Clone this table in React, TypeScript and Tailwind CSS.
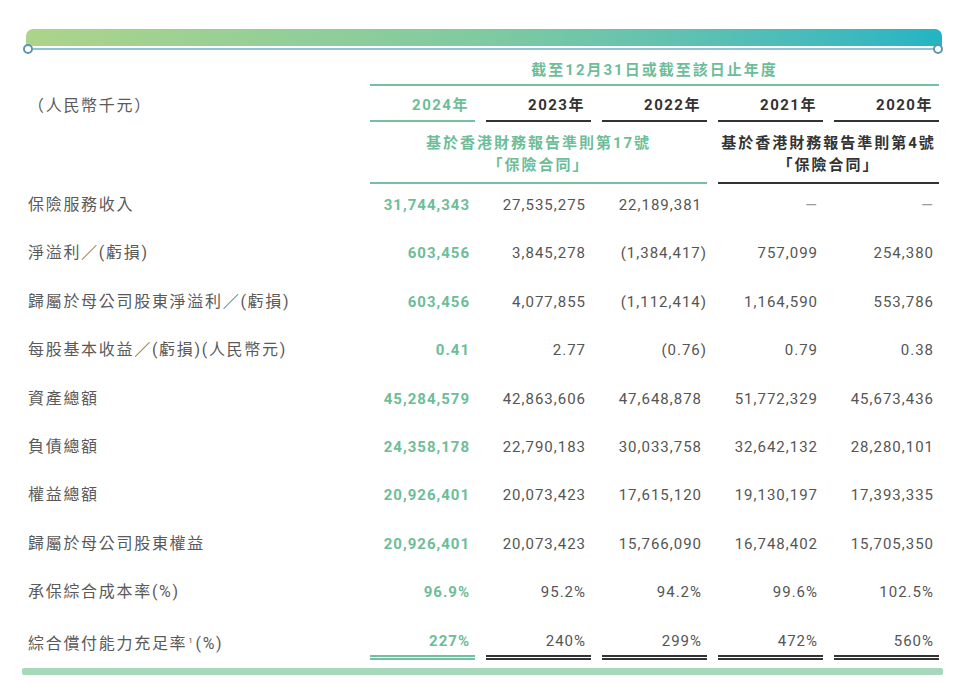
import React from 'react';

const GRID = 'grid grid-cols-[333px_105px_105px_105px_105px_105px] gap-x-[11px]';
const FONT = { fontFamily: 'Roboto, "Noto Sans CJK TC", sans-serif' };

const rows: string[][] = [
    ['保險服務收入', '31,744,343', '27,535,275', '22,189,381', '—', '—'],
    ['淨溢利／(虧損)', '603,456', '3,845,278', '(1,384,417)', '757,099', '254,380'],
    ['歸屬於母公司股東淨溢利／(虧損)', '603,456', '4,077,855', '(1,112,414)', '1,164,590', '553,786'],
    ['每股基本收益／(虧損)(人民幣元)', '0.41', '2.77', '(0.76)', '0.79', '0.38'],
    ['資產總額', '45,284,579', '42,863,606', '47,648,878', '51,772,329', '45,673,436'],
    ['負債總額', '24,358,178', '22,790,183', '30,033,758', '32,642,132', '28,280,101'],
    ['權益總額', '20,926,401', '20,073,423', '17,615,120', '19,130,197', '17,393,335'],
    ['歸屬於母公司股東權益', '20,926,401', '20,073,423', '15,766,090', '16,748,402', '15,705,350'],
    ['承保綜合成本率(%)', '96.9%', '95.2%', '94.2%', '99.6%', '102.5%'],
    ['綜合償付能力充足率¹(%)', '227%', '240%', '299%', '472%', '560%'],
];

const years = ['2024', '2023', '2022', '2021', '2020'];

const Label: React.FC<{ text: string }> = ({ text }) => {
    // superscript footnote marker
    if (text.includes('¹')) {
        const [a, b] = text.split('¹');
        return (
            <span>
                {a}
                <span className="text-[8px] align-super mx-[1px]">1</span>
                {b}
            </span>
        );
    }
    return <span>{text}</span>;
};

const App: React.FC = () => {
    return (
        <div className="w-[960px] h-[684px] bg-white pt-[29px] overflow-hidden" style={FONT}>
            {/* top gradient bar */}
            <div className="ml-[26px] w-[916px] h-[17px] rounded-t-[7px] bg-gradient-to-r from-[#acd48a] via-[#7fcaa0] to-[#22b4c4]" />
            <div className="ml-[23px] w-[920px] h-[10px] -mt-[2px] flex items-center">
                <div className="w-[10px] h-[10px] rounded-full border-2 border-[#5f95b0] bg-white flex-shrink-0" />
                <div className="flex-1 h-[2px] bg-[#8fc2d8]" />
                <div className="w-[10px] h-[10px] rounded-full border-2 border-[#5f95b0] bg-white flex-shrink-0" />
            </div>

            <div className="ml-[26px]">
                {/* header: period */}
                <div className={GRID}>
                    <div />
                    <div className="col-span-5 pt-[5px] pb-[3px] leading-[22px] border-b-2 border-[#74c0a0] text-center text-[15px] font-bold tracking-[2px] text-[#6dbd98]">
                        截至12月31日或截至該日止年度
                    </div>
                </div>

                {/* header: years */}
                <div className={GRID}>
                    <div className="pt-[9px] pl-[2px] leading-[22px] text-[16px] tracking-[1.7px] text-[#5a5a5a]">（人民幣千元）</div>
                    {years.map((y, i) => (
                        <div
                            key={y}
                            className={`pt-[8px] pb-[4px] leading-[22px] border-b-2 text-right pr-[6px] text-[15px] font-bold tracking-[1.5px] ${i === 0 ? 'border-[#74c0a0] text-[#6dbd98]' : 'border-[#333333] text-[#333333]'}`}
                        >
                            {y}年
                        </div>
                    ))}
                </div>

                {/* header: standards */}
                <div className={GRID}>
                    <div />
                    <div className="col-span-3 pt-[10px] pb-[6px] leading-[22px] border-b-2 border-[#74c0a0] text-center text-[15px] font-bold tracking-[2px] text-[#6dbd98]">
                        <div>基於香港財務報告準則第17號</div>
                        <div>「保險合同」</div>
                    </div>
                    <div className="col-span-2 pt-[10px] pb-[6px] leading-[22px] border-b-2 border-[#333333] text-center text-[15px] font-bold tracking-[2px] text-[#333333] whitespace-nowrap">
                        <div>基於香港財務報告準則第4號</div>
                        <div>「保險合同」</div>
                    </div>
                </div>

                {/* data rows */}
                {rows.map((r, ri) => {
                    const last = ri === rows.length - 1;
                    return (
                        <div key={ri} className={GRID}>
                            <div className={`pt-[10px] pl-[2px] leading-[22px] text-[16px] tracking-[1.7px] text-[#5a5a5a] whitespace-nowrap ${last ? 'h-[40px]' : 'h-[48.4px]'}`}>
                                <Label text={r[0]} />
                            </div>
                            {r.slice(1).map((v, ci) => {
                                const neg = v.startsWith('(');
                                const dash = v === '—';
                                return (
                                    <div
                                        key={ci}
                                        className={[
                                            'pt-[10px] leading-[22px] text-right text-[15px] tracking-[1px] whitespace-nowrap',
                                            neg ? 'pr-0' : 'pr-[5px]',
                                            ci === 0 ? 'font-bold text-[#6dbd98]' : dash ? 'text-[#9a9a9a]' : 'text-[#555555]',
                                            last ? 'pb-[3px] border-b-[5px] border-double' : 'h-[48.4px]',
                                            last ? (ci === 0 ? 'border-[#74c0a0]' : 'border-[#333333]') : '',
                                        ].join(' ')}
                                    >
                                        {v}
                                    </div>
                                );
                            })}
                        </div>
                    );
                })}
            </div>

            {/* bottom bar */}
            <div className="ml-[22px] w-[921px] h-[7px] mt-[8px] rounded-[2px] bg-[#a6d8b9]" />
        </div>
    );
};

export default App;
